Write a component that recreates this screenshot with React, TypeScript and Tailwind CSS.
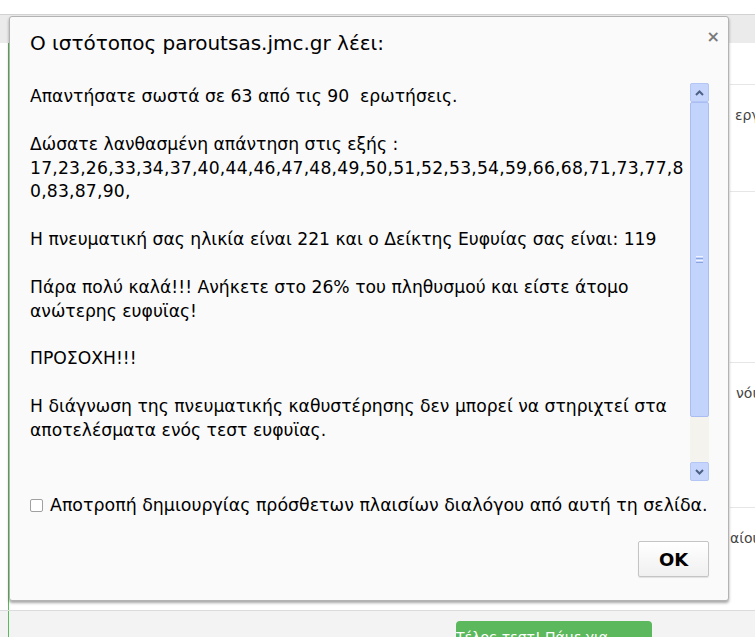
import React from 'react';

const Chevron: React.FC<{ down?: boolean }> = ({ down }) => (
  <svg width="9" height="6" viewBox="0 0 9 6" className={down ? 'rotate-180' : ''}>
    <path d="M1 5 L4.5 1.5 L8 5" fill="none" stroke="#4d6185" strokeWidth="2" />
  </svg>
);

const ScrollBar: React.FC = () => (
  <div className="flex h-full w-[19px] flex-col bg-[#f4f3ee]">
    <div className="flex h-[19px] items-center justify-center rounded-[2px] border border-[#b4c6f3] bg-[#c6d5fc]">
      <Chevron />
    </div>
    <div className="flex h-[315px] items-center justify-center rounded-[2px] border border-[#a9bdf2] bg-[#c2d3fc]">
      <div className="flex flex-col gap-[1px]">
        <div className="h-px w-[7px] bg-[#eef3ff]" />
        <div className="h-px w-[7px] bg-[#8ca4e0]" />
        <div className="h-px w-[7px] bg-[#eef3ff]" />
        <div className="h-px w-[7px] bg-[#8ca4e0]" />
      </div>
    </div>
    <div className="flex-1" />
    <div className="flex h-[19px] items-center justify-center rounded-[2px] border border-[#b4c6f3] bg-[#c6d5fc]">
      <Chevron down />
    </div>
  </div>
);

const Backdrop: React.FC = () => (
  <div className="flex h-[637px] w-[755px] flex-col bg-white font-['DejaVu_Sans',sans-serif]">
    <div className="h-[14px]" />
    <div className="h-[29px] border-t border-[#d2d2d2] bg-[#ebebeb]" />
    <div className="flex flex-1">
      <div className="w-[8px]" />
      <div className="w-px bg-[#5cb85c]" />
      <div className="flex-1" />
      <div className="flex w-[25px] flex-col overflow-hidden text-[14px] text-[#444]">
        <div className="h-[42px] border-b border-[#e6e6e6]" />
        <div className="h-[107px] border-b border-[#e6e6e6] pl-[5px] pt-[20px] whitespace-nowrap">εργ</div>
        <div className="h-[171px] border-b border-[#e6e6e6]" />
        <div className="h-[145px] border-b border-[#e6e6e6] pl-[6px] pt-[20px] whitespace-nowrap">νόι</div>
        <div className="flex-1 pl-0 pt-[20px] whitespace-nowrap">αίου</div>
      </div>
    </div>
    <div className="flex h-[27px] border-t border-[#dcdcdc] bg-[#f3f3f3]">
      <div className="w-[8px]" />
      <div className="w-px bg-[#5cb85c]" />
      <div className="w-[447px]" />
      <div className="mt-[10px] flex h-[30px] w-[196px] justify-center rounded-[4px] bg-[#5cb85c] pt-[6px] text-[14px] text-white">
        Τέλος τεστ! Πάμε για σχόλια
      </div>
    </div>
  </div>
);

const App: React.FC = () => {
  const line = 'leading-[23.85px]';
  return (
    <div className="relative h-[637px] w-[755px] overflow-hidden">
      <Backdrop />

      {/* alert dialog */}
      <div className="absolute left-[9px] top-[16px] flex h-[585px] w-[720px] flex-col rounded-[3px] border border-[#b3b3b3] bg-[#fafafa] pl-[20px] pr-[19px] font-['DejaVu_Sans',sans-serif] text-black shadow-[0_2px_3px_rgba(0,0,0,0.35)]">
        <div className="absolute right-[8px] top-[12px] text-[16px] font-bold leading-none text-[#7a7a7a]">×</div>

        <div className="pt-[14px] text-[20px] leading-[24px]">Ο ιστότοπος paroutsas.jmc.gr λέει:</div>

        <div className="mt-[28px] flex h-[398px]">
          <div className={`flex-1 overflow-hidden pt-[2px] text-[17.2px] ${line}`}>
            <div>Απαντήσατε σωστά σε 63 από τις 90&nbsp; ερωτήσεις.</div>
            <div className="h-[23.85px]" />
            <div>Δώσατε λανθασμένη απάντηση στις εξής :</div>
            <div className="tracking-[0.2px] whitespace-nowrap">17,23,26,33,34,37,40,44,46,47,48,49,50,51,52,53,54,59,66,68,71,73,77,8</div>
            <div className="tracking-[0.2px]">0,83,87,90,</div>
            <div className="h-[23.85px]" />
            <div>Η πνευματική σας ηλικία είναι 221 και ο Δείκτης Ευφυίας σας είναι: 119</div>
            <div className="h-[23.85px]" />
            <div>Πάρα πολύ καλά!!! Ανήκετε στο 26% του πληθυσμού και είστε άτομο</div>
            <div>ανώτερης ευφυϊας!</div>
            <div className="h-[23.85px]" />
            <div>ΠΡΟΣΟΧΗ!!!</div>
            <div className="h-[23.85px]" />
            <div>Η διάγνωση της πνευματικής καθυστέρησης δεν μπορεί να στηριχτεί στα</div>
            <div>αποτελέσματα ενός τεστ ευφυϊας.</div>
          </div>
          <ScrollBar />
        </div>

        <div className="mt-[14px] flex items-center gap-[7px] text-[17.4px] leading-[20px]">
          <div className="h-[13px] w-[13px] shrink-0 rounded-[2px] border border-[#a0a0a0] bg-white" />
          <span className="whitespace-nowrap">Αποτροπή δημιουργίας πρόσθετων πλαισίων διαλόγου από αυτή τη σελίδα.</span>
        </div>

        <div className="mt-[26px] flex justify-end">
          <button className="h-[36px] w-[71px] rounded-[2px] border border-[#c4c4c4] bg-gradient-to-b from-white to-[#f0f0f0] text-[18px] font-bold text-black shadow-[0_1px_1px_rgba(0,0,0,0.1)]">
            OK
          </button>
        </div>
      </div>
    </div>
  );
};

export default App;
